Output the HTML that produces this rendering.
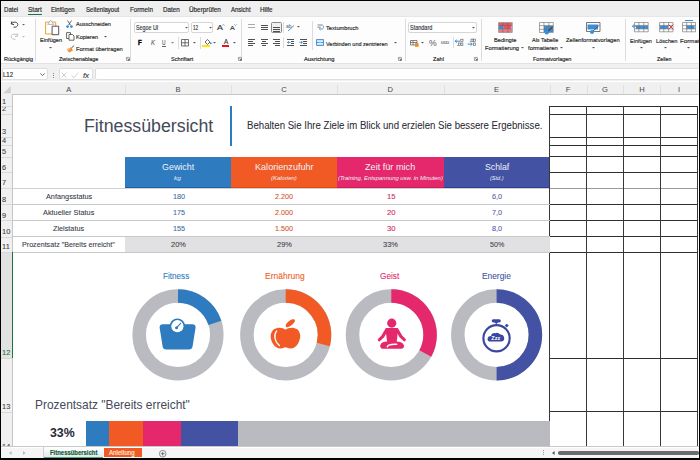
<!DOCTYPE html>
<html><head><meta charset="utf-8">
<style>
*{margin:0;padding:0;box-sizing:border-box}
html,body{width:700px;height:460px;overflow:hidden;background:#fff;font-family:"Liberation Sans",sans-serif;color:#262626}
.a{position:absolute}
.t{position:absolute;white-space:nowrap;line-height:1;transform-origin:0 0;-webkit-text-stroke:0.16px currentColor}
.n{-webkit-text-stroke:0}
svg{position:absolute;overflow:visible}
</style></head><body>
<div class="a" style="left:0px;top:0px;width:700px;height:16px;background:#efefef;"></div>
<div class="t" style="left:3.90px;top:6px;font-size:6.40px;color:#262626;font-weight:normal;font-style:normal;transform:scaleX(0.9511);line-height:7px;">Datei</div>
<div class="t" style="left:27.90px;top:6px;font-size:6.40px;color:#262626;font-weight:normal;font-style:normal;transform:scaleX(1.0218);line-height:7px;">Start</div>
<div class="t" style="left:51.40px;top:6px;font-size:6.40px;color:#262626;font-weight:normal;font-style:normal;transform:scaleX(0.9347);line-height:7px;">Einfügen</div>
<div class="t" style="left:86.00px;top:6px;font-size:6.40px;color:#262626;font-weight:normal;font-style:normal;transform:scaleX(0.9460);line-height:7px;">Seitenlayout</div>
<div class="t" style="left:130.00px;top:6px;font-size:6.40px;color:#262626;font-weight:normal;font-style:normal;transform:scaleX(0.9763);line-height:7px;">Formeln</div>
<div class="t" style="left:162.60px;top:6px;font-size:6.40px;color:#262626;font-weight:normal;font-style:normal;transform:scaleX(0.9785);line-height:7px;">Daten</div>
<div class="t" style="left:188.90px;top:6px;font-size:6.40px;color:#262626;font-weight:normal;font-style:normal;transform:scaleX(0.9939);line-height:7px;">Überprüfen</div>
<div class="t" style="left:230.70px;top:6px;font-size:6.40px;color:#262626;font-weight:normal;font-style:normal;transform:scaleX(0.9345);line-height:7px;">Ansicht</div>
<div class="t" style="left:260.00px;top:6px;font-size:6.40px;color:#262626;font-weight:normal;font-style:normal;transform:scaleX(0.9848);line-height:7px;">Hilfe</div>
<div class="a" style="left:28px;top:14px;width:14px;height:1.4px;background:#1e7145;"></div>
<div class="a" style="left:0px;top:16px;width:700px;height:48px;background:#fdfdfd;"></div>
<div class="a" style="left:0px;top:16px;width:700px;height:1px;background:#e6e6e6;"></div>
<div class="a" style="left:34.5px;top:19px;width:0.8px;height:42px;background:#dcdcdc;"></div>
<div class="a" style="left:130.2px;top:19px;width:0.8px;height:42px;background:#dcdcdc;"></div>
<div class="a" style="left:241.4px;top:19px;width:0.8px;height:42px;background:#dcdcdc;"></div>
<div class="a" style="left:405.4px;top:19px;width:0.8px;height:42px;background:#dcdcdc;"></div>
<div class="a" style="left:480.5px;top:19px;width:0.8px;height:42px;background:#dcdcdc;"></div>
<div class="a" style="left:625.4px;top:19px;width:0.8px;height:42px;background:#dcdcdc;"></div>
<div class="a" style="left:311.6px;top:21px;width:0.8px;height:29px;background:#dcdcdc;"></div>
<div class="a" style="left:178.2px;top:37px;width:0.8px;height:12px;background:#dcdcdc;"></div>
<div class="a" style="left:199.7px;top:37px;width:0.8px;height:12px;background:#dcdcdc;"></div>
<div class="a" style="left:283.4px;top:22px;width:0.8px;height:11px;background:#dcdcdc;"></div>
<div class="a" style="left:283.4px;top:37px;width:0.8px;height:11px;background:#dcdcdc;"></div>
<div class="a" style="left:452.6px;top:37px;width:0.8px;height:11px;background:#dcdcdc;"></div>
<svg style="left:10px;top:20px;" width="9" height="8" viewBox="0 0 9 8"><path d="M2 1.2 L1.2 4 L4 4.6" fill="none" stroke="#333" stroke-width="0.9"/><path d="M1.5 3.8 C3 1.5 7.5 1.5 7.8 4.5 C8 6.5 5.5 7.6 3.5 7.2" fill="none" stroke="#333" stroke-width="0.9"/></svg>
<svg style="left:22.0px;top:23.5px;" width="3" height="2" viewBox="0 0 3 2"><path d="M0 0 L3 0 L1.5 1.6 Z" fill="#666"/></svg>
<svg style="left:10px;top:32px;" width="9" height="8" viewBox="0 0 9 8"><path d="M7 1.2 L7.8 4 L5 4.6" fill="none" stroke="#bbb" stroke-width="0.9"/><path d="M7.5 3.8 C6 1.5 1.5 1.5 1.2 4.5 C1 6.5 3.5 7.6 5.5 7.2" fill="none" stroke="#bbb" stroke-width="0.9"/></svg>
<svg style="left:22.0px;top:35.5px;" width="3" height="2" viewBox="0 0 3 2"><path d="M0 0 L3 0 L1.5 1.6 Z" fill="#bbb"/></svg>
<div class="t" style="left:3.60px;top:56px;font-size:5.90px;color:#262626;font-weight:normal;font-style:normal;transform:scaleX(0.9371);line-height:6px;">Rückgängig</div>
<svg style="left:44px;top:19px;" width="16" height="17" viewBox="0 0 16 17"><path d="M1.6 3.1 H11.7 V15 H1.6 Z" fill="#fff" stroke="#f0a030" stroke-width="1"/><path d="M3.6 5.4 L6.7 1.2 L9.8 5.4 Z" fill="#fff" stroke="#999" stroke-width="0.7"/><path d="M8.1 7.2 H14.7 V15.7 H8.1 Z" fill="#fff" stroke="#444" stroke-width="0.9"/></svg>
<div class="t" style="left:39.90px;top:36px;font-size:6.20px;color:#262626;font-weight:normal;font-style:normal;transform:scaleX(0.9029);line-height:7px;">Einfügen</div>
<svg style="left:48.9px;top:46.5px;" width="3" height="2" viewBox="0 0 3 2"><path d="M0 0 L3 0 L1.5 1.6 Z" fill="#555"/></svg>
<svg style="left:65px;top:20px;" width="9" height="9" viewBox="0 0 9 9"><path d="M2.5 0.5 L5.5 5.2 M6.5 0.5 L3.5 5.2" stroke="#444" stroke-width="0.8"/><circle cx="2.6" cy="6.6" r="1.4" fill="#3b8ed8"/><circle cx="6.4" cy="6.6" r="1.4" fill="#3b8ed8"/></svg>
<div class="t" style="left:75.90px;top:20px;font-size:6.20px;color:#262626;font-weight:normal;font-style:normal;transform:scaleX(0.8960);line-height:7px;">Ausschneiden</div>
<svg style="left:65.5px;top:32px;" width="9" height="9" viewBox="0 0 9 9"><path d="M0.6 0.6 H4.5 V6.5 H0.6 Z" fill="none" stroke="#444" stroke-width="0.8"/><path d="M3 2.5 H6.5 L8 4 V8.2 H3 Z" fill="#fff" stroke="#444" stroke-width="0.8"/></svg>
<div class="t" style="left:75.90px;top:33px;font-size:6.20px;color:#262626;font-weight:normal;font-style:normal;transform:scaleX(0.8905);line-height:7px;">Kopieren</div>
<svg style="left:103.5px;top:35.8px;" width="3" height="2" viewBox="0 0 3 2"><path d="M0 0 L3 0 L1.5 1.6 Z" fill="#555"/></svg>
<svg style="left:65.5px;top:44.5px;" width="9" height="8" viewBox="0 0 9 8"><path d="M0.8 4.2 L5 2.2 L7 5.5 L3 7.6 Z" fill="#f38b2a"/><path d="M5.4 3 L8.2 0.5" stroke="#444" stroke-width="0.9"/><path d="M1.5 5 L4.5 3.6" stroke="#fff" stroke-width="0.6"/></svg>
<div class="t" style="left:75.90px;top:45px;font-size:6.20px;color:#262626;font-weight:normal;font-style:normal;transform:scaleX(0.9114);line-height:7px;">Format übertragen</div>
<div class="t" style="left:58.80px;top:56px;font-size:5.90px;color:#262626;font-weight:normal;font-style:normal;transform:scaleX(0.9241);line-height:6px;">Zwischenablage</div>
<svg style="left:126px;top:57px;" width="4" height="4" viewBox="0 0 4 4"><path d="M0.4 0.4 H3.4 V3.4 H0.4 Z" fill="none" stroke="#666" stroke-width="0.6"/><path d="M1.4 1.4 L3.2 3.2 M3.2 1.8 V3.2 H1.8" fill="none" stroke="#444" stroke-width="0.6"/></svg>
<div class="a" style="left:134.2px;top:22.3px;width:54.8px;height:10.9px;background:#fff;border:0.7px solid #d6d6d6;border-radius:2px"></div>
<div class="t" style="left:135.70px;top:24px;font-size:6.30px;color:#3a3a48;font-weight:normal;font-style:normal;transform:scaleX(0.8489);line-height:7px;">Segoe UI</div>
<svg style="left:184.9px;top:27px;" width="3" height="2" viewBox="0 0 3 2"><path d="M0 0 L3 0 L1.5 1.6 Z" fill="#555"/></svg>
<div class="a" style="left:191px;top:22.3px;width:22px;height:10.9px;background:#fff;border:0.7px solid #d6d6d6;border-radius:2px"></div>
<div class="t" style="left:192.60px;top:24px;font-size:6.30px;color:#3a3a48;font-weight:normal;font-style:normal;transform:scaleX(0.7420);line-height:7px;">12</div>
<svg style="left:209.1px;top:27px;" width="3" height="2" viewBox="0 0 3 2"><path d="M0 0 L3 0 L1.5 1.6 Z" fill="#555"/></svg>
<div class="t" style="left:217.00px;top:23px;font-size:7.56px;color:#333;font-weight:normal;font-style:normal;transform:scaleX(1.1703);line-height:9px;">A</div>
<svg style="left:221.5px;top:23.5px;" width="3" height="2" viewBox="0 0 3 2"><path d="M0.2 1.6 L1.5 0.3 L2.8 1.6" fill="none" stroke="#3b8ed8" stroke-width="0.7"/></svg>
<div class="t" style="left:230.20px;top:25px;font-size:5.96px;color:#333;font-weight:normal;font-style:normal;transform:scaleX(1.1824);line-height:6px;">A</div>
<svg style="left:234px;top:24px;" width="3" height="2" viewBox="0 0 3 2"><path d="M0.2 0.3 L1.5 1.6 L2.8 0.3" fill="none" stroke="#3b8ed8" stroke-width="0.7"/></svg>
<div class="t" style="left:138.10px;top:39px;font-size:6.83px;color:#000;font-weight:bold;font-style:normal;transform:scaleX(0.9105);line-height:7px;-webkit-text-stroke:0.35px #000">F</div>
<div class="t" style="left:150.50px;top:39px;font-size:6.83px;color:#666;font-weight:normal;font-style:italic;transform:scaleX(0.8778);line-height:7px;">K</div>
<div class="t" style="left:162.00px;top:39px;font-size:6.83px;color:#666;font-weight:normal;font-style:normal;transform:scaleX(0.7094);line-height:7px;">U</div>
<div class="a" style="left:161.8px;top:46px;width:4px;height:0.7px;background:#666;"></div>
<svg style="left:171.0px;top:42px;" width="3" height="2" viewBox="0 0 3 2"><path d="M0 0 L3 0 L1.5 1.6 Z" fill="#777"/></svg>
<svg style="left:181px;top:39px;" width="8" height="7.5" viewBox="0 0 8 7.5"><path d="M0.5 0.5 H7.5 V7 H0.5 Z M0.5 3.75 H7.5 M4 0.5 V7" fill="none" stroke="#444" stroke-width="0.75"/></svg>
<svg style="left:192.7px;top:42px;" width="3" height="2" viewBox="0 0 3 2"><path d="M0 0 L3 0 L1.5 1.6 Z" fill="#555"/></svg>
<svg style="left:203.5px;top:38.5px;" width="8" height="6" viewBox="0 0 8 6"><path d="M1 3 L3.5 0.5 L6 3 L3.5 5.5 Z" fill="none" stroke="#444" stroke-width="0.8"/><circle cx="6.8" cy="4.2" r="1" fill="#3b8ed8"/></svg>
<div class="a" style="left:202.2px;top:45px;width:8.2px;height:1.8px;background:#ffe600;"></div>
<svg style="left:213.2px;top:42px;" width="3" height="2" viewBox="0 0 3 2"><path d="M0 0 L3 0 L1.5 1.6 Z" fill="#555"/></svg>
<div class="t" style="left:223.60px;top:37px;font-size:7.27px;color:#333;font-weight:normal;font-style:normal;transform:scaleX(0.8664);line-height:9px;">A</div>
<div class="a" style="left:221.8px;top:45px;width:7.3px;height:1.8px;background:#ee1111;"></div>
<svg style="left:232.9px;top:42px;" width="3" height="2" viewBox="0 0 3 2"><path d="M0 0 L3 0 L1.5 1.6 Z" fill="#555"/></svg>
<div class="t" style="left:171.20px;top:56px;font-size:5.90px;color:#262626;font-weight:normal;font-style:normal;transform:scaleX(0.9489);line-height:6px;">Schriftart</div>
<svg style="left:238px;top:57px;" width="4" height="4" viewBox="0 0 4 4"><path d="M0.4 0.4 H3.4 V3.4 H0.4 Z" fill="none" stroke="#666" stroke-width="0.6"/><path d="M1.4 1.4 L3.2 3.2 M3.2 1.8 V3.2 H1.8" fill="none" stroke="#444" stroke-width="0.6"/></svg>
<div class="a" style="left:248.4px;top:24.0px;width:6.6px;height:0.8px;background:#aaa;"></div>
<div class="a" style="left:248.4px;top:27.3px;width:6.6px;height:0.8px;background:#aaa;"></div>
<div class="a" style="left:260.6px;top:25.2px;width:7px;height:0.8px;background:#505050;"></div>
<div class="a" style="left:260.6px;top:27.099999999999998px;width:7px;height:0.8px;background:#505050;"></div>
<div class="a" style="left:260.6px;top:29.0px;width:7px;height:0.8px;background:#505050;"></div>
<div class="a" style="left:270.9px;top:22.2px;width:10.9px;height:11.2px;background:#f0f0f0;border:0.8px solid #888;border-radius:1.5px"></div>
<div class="a" style="left:273.4px;top:26.6px;width:6.2px;height:0.8px;background:#505050;"></div>
<div class="a" style="left:273.4px;top:28.8px;width:6.2px;height:0.8px;background:#505050;"></div>
<div class="a" style="left:273.4px;top:31.0px;width:6.2px;height:0.8px;background:#505050;"></div>
<svg style="left:286px;top:23px;" width="9" height="9" viewBox="0 0 9 9"><text x="0" y="5" font-size="5" fill="#555" font-family="Liberation Sans">ab</text><path d="M2 8 L8 2.5" stroke="#3b8ed8" stroke-width="0.9"/></svg>
<svg style="left:296.5px;top:26px;" width="3" height="2" viewBox="0 0 3 2"><path d="M0 0 L3 0 L1.5 1.6 Z" fill="#555"/></svg>
<div class="a" style="left:248.4px;top:39.2px;width:6.8px;height:0.8px;background:#505050;"></div>
<div class="a" style="left:248.4px;top:41.2px;width:4.6px;height:0.8px;background:#505050;"></div>
<div class="a" style="left:248.4px;top:43.2px;width:6.8px;height:0.8px;background:#505050;"></div>
<div class="a" style="left:248.4px;top:45.2px;width:4.6px;height:0.8px;background:#505050;"></div>
<div class="a" style="left:260.8px;top:39.2px;width:6.8px;height:0.8px;background:#505050;"></div>
<div class="a" style="left:261.9px;top:41.2px;width:4.6px;height:0.8px;background:#505050;"></div>
<div class="a" style="left:260.8px;top:43.2px;width:6.8px;height:0.8px;background:#505050;"></div>
<div class="a" style="left:261.9px;top:45.2px;width:4.6px;height:0.8px;background:#505050;"></div>
<div class="a" style="left:273px;top:39.2px;width:6.8px;height:0.8px;background:#505050;"></div>
<div class="a" style="left:275.2px;top:41.2px;width:4.6px;height:0.8px;background:#505050;"></div>
<div class="a" style="left:273px;top:43.2px;width:6.8px;height:0.8px;background:#505050;"></div>
<div class="a" style="left:275.2px;top:45.2px;width:4.6px;height:0.8px;background:#505050;"></div>
<div class="a" style="left:287px;top:39.2px;width:7px;height:0.8px;background:#505050;"></div>
<div class="a" style="left:290.5px;top:41.2px;width:3.5px;height:0.8px;background:#505050;"></div>
<div class="a" style="left:290.5px;top:43.2px;width:3.5px;height:0.8px;background:#505050;"></div>
<div class="a" style="left:287px;top:45.2px;width:7px;height:0.8px;background:#505050;"></div>
<svg style="left:286.5px;top:40.8px;" width="4" height="3" viewBox="0 0 4 3"><path d="M3.6 1.4 H0.6 M1.9 0.2 L0.5 1.4 L1.9 2.6" fill="none" stroke="#3b8ed8" stroke-width="0.9"/></svg>
<div class="a" style="left:299.5px;top:39.2px;width:7px;height:0.8px;background:#505050;"></div>
<div class="a" style="left:303px;top:41.2px;width:3.5px;height:0.8px;background:#505050;"></div>
<div class="a" style="left:303px;top:43.2px;width:3.5px;height:0.8px;background:#505050;"></div>
<div class="a" style="left:299.5px;top:45.2px;width:7px;height:0.8px;background:#505050;"></div>
<svg style="left:299.2px;top:40.8px;" width="4" height="3" viewBox="0 0 4 3"><path d="M0.3 1.4 H3.3 M2 0.2 L3.4 1.4 L2 2.6" fill="none" stroke="#3b8ed8" stroke-width="0.9"/></svg>
<svg style="left:317px;top:24px;" width="7" height="8" viewBox="0 0 7 8"><path d="M0.5 1 H5 M0.5 3.2 H3.5" stroke="#666" stroke-width="0.8"/><path d="M5 1 C7 1 7 5 5 5 H2.5 M3.5 4 L2.4 5 L3.5 6" fill="none" stroke="#3b8ed8" stroke-width="0.8"/></svg>
<div class="t" style="left:326.40px;top:24px;font-size:6.20px;color:#262626;font-weight:normal;font-style:normal;transform:scaleX(0.9157);line-height:7px;">Textumbruch</div>
<svg style="left:316px;top:39.3px;" width="8" height="7" viewBox="0 0 8 7"><path d="M0.5 0.5 H7.5 V6.5 H0.5 Z" fill="#cfe3f7" stroke="#3b8ed8" stroke-width="0.9"/><path d="M0.5 3.5 H7.5" stroke="#3b8ed8" stroke-width="0.9"/><path d="M2 2.2 L3.2 3.5 L2 4.8 M6 2.2 L4.8 3.5 L6 4.8" fill="none" stroke="#fff" stroke-width="0.6"/></svg>
<div class="t" style="left:326.40px;top:40px;font-size:6.20px;color:#262626;font-weight:normal;font-style:normal;transform:scaleX(0.8905);line-height:7px;">Verbinden und zentrieren</div>
<svg style="left:394.2px;top:42.3px;" width="3" height="2" viewBox="0 0 3 2"><path d="M0 0 L3 0 L1.5 1.6 Z" fill="#555"/></svg>
<div class="t" style="left:303.70px;top:56px;font-size:5.90px;color:#262626;font-weight:normal;font-style:normal;transform:scaleX(0.9821);line-height:6px;">Ausrichtung</div>
<svg style="left:398px;top:57.3px;" width="4" height="4" viewBox="0 0 4 4"><path d="M0.4 0.4 H3.4 V3.4 H0.4 Z" fill="none" stroke="#666" stroke-width="0.6"/><path d="M1.4 1.4 L3.2 3.2 M3.2 1.8 V3.2 H1.8" fill="none" stroke="#444" stroke-width="0.6"/></svg>
<div class="a" style="left:408.3px;top:22.3px;width:68.8px;height:10.8px;background:#fff;border:0.7px solid #d6d6d6;border-radius:2px"></div>
<div class="t" style="left:409.70px;top:24px;font-size:6.30px;color:#3a3a48;font-weight:normal;font-style:normal;transform:scaleX(0.8721);line-height:7px;">Standard</div>
<svg style="left:472.2px;top:26.8px;" width="3" height="2" viewBox="0 0 3 2"><path d="M0 0 L3 0 L1.5 1.6 Z" fill="#555"/></svg>
<svg style="left:409.7px;top:40px;" width="9" height="7" viewBox="0 0 9 7"><path d="M0.5 0.5 H7 V5 H0.5 Z M0.5 2.5 H7 M3 0.5 V5" fill="none" stroke="#555" stroke-width="0.7"/><rect x="5" y="3.2" width="3.6" height="3.6" fill="#f08a24"/></svg>
<svg style="left:420.8px;top:42.2px;" width="3" height="2" viewBox="0 0 3 2"><path d="M0 0 L3 0 L1.5 1.6 Z" fill="#555"/></svg>
<div class="t" style="left:429.40px;top:37px;font-size:9.50px;color:#555;font-weight:normal;font-style:normal;transform:scaleX(0.9115);line-height:11px;-webkit-text-stroke:0">%</div>
<div class="t" style="left:441.10px;top:40px;font-size:4.00px;color:#777;font-weight:normal;font-style:normal;transform:scaleX(1.1986);line-height:5px;">000</div>
<svg style="left:454px;top:38px;" width="10" height="9" viewBox="0 0 10 9"><path d="M6.2 3.2 H1.4 M2.8 1.8 L1 3.2 L2.8 4.6" fill="none" stroke="#3b8ed8" stroke-width="1"/><rect x="6.8" y="1.2" width="2.2" height="2.2" fill="none" stroke="#555" stroke-width="0.6"/><circle cx="3.6" cy="7.2" r="0.45" fill="#555"/><rect x="4.4" y="5" width="2" height="2.3" fill="none" stroke="#555" stroke-width="0.6"/><rect x="6.9" y="5" width="2" height="2.3" fill="none" stroke="#555" stroke-width="0.6"/></svg>
<svg style="left:467px;top:38px;" width="10" height="9" viewBox="0 0 10 9"><circle cx="3.2" cy="3.4" r="0.45" fill="#555"/><rect x="4" y="1.1" width="2" height="2.3" fill="none" stroke="#555" stroke-width="0.6"/><rect x="6.5" y="1.1" width="2" height="2.3" fill="none" stroke="#555" stroke-width="0.6"/><rect x="6.3" y="5" width="2.2" height="2.3" fill="none" stroke="#555" stroke-width="0.6"/><path d="M0.6 6.1 H5 M3.6 4.7 L5.4 6.1 L3.6 7.5" fill="none" stroke="#3b8ed8" stroke-width="1"/></svg>
<div class="t" style="left:433.10px;top:56px;font-size:5.90px;color:#262626;font-weight:normal;font-style:normal;transform:scaleX(0.9497);line-height:6px;">Zahl</div>
<svg style="left:474.3px;top:57.3px;" width="4" height="4" viewBox="0 0 4 4"><path d="M0.4 0.4 H3.4 V3.4 H0.4 Z" fill="none" stroke="#666" stroke-width="0.6"/><path d="M1.4 1.4 L3.2 3.2 M3.2 1.8 V3.2 H1.8" fill="none" stroke="#444" stroke-width="0.6"/></svg>
<svg style="left:498px;top:21.8px;" width="14.8" height="10.9" viewBox="0 0 14.8 10.9"><rect x="1" y="1" width="12.8" height="3" fill="#f05060"/><rect x="1" y="4" width="4.5" height="3" fill="#3b8ed8"/><rect x="5.5" y="4" width="8" height="3" fill="#f05060"/><rect x="1" y="7.3" width="12.8" height="3" fill="#f07880"/><path d="M0.5 0.5 H14.3 V10.4 H0.5 Z M0.5 3.63 H14.3 M0.5 7.27 H14.3 M4.93 0.5 V10.4 M9.87 0.5 V10.4" fill="none" stroke="#6a6a6a" stroke-width="0.6"/></svg>
<div class="t" style="left:494.10px;top:36px;font-size:6.20px;color:#262626;font-weight:normal;font-style:normal;transform:scaleX(0.9193);line-height:7px;">Bedingte</div>
<div class="t" style="left:485.40px;top:44px;font-size:6.20px;color:#262626;font-weight:normal;font-style:normal;transform:scaleX(0.9249);line-height:7px;">Formatierung</div>
<svg style="left:520.8px;top:47px;" width="3" height="2" viewBox="0 0 3 2"><path d="M0 0 L3 0 L1.5 1.6 Z" fill="#555"/></svg>
<svg style="left:538.5px;top:21.8px;" width="14.8" height="11" viewBox="0 0 14.8 11"><rect x="5" y="3.7" width="9" height="6.5" fill="#3b8ed8"/><path d="M0.5 0.5 H14.3 V10.5 H0.5 Z M0.5 3.67 H14.3 M0.5 7.33 H14.3 M4.93 0.5 V10.5 M9.87 0.5 V10.5" fill="none" stroke="#6a6a6a" stroke-width="0.6"/></svg>
<svg style="left:544px;top:26px;" width="10" height="9" viewBox="0 0 10 9"><path d="M1.5 7.5 L8.5 1" stroke="#444" stroke-width="1.1"/><circle cx="2.8" cy="6.2" r="2.2" fill="#3b8ed8"/></svg>
<div class="t" style="left:532.00px;top:36px;font-size:6.20px;color:#262626;font-weight:normal;font-style:normal;transform:scaleX(0.8838);line-height:7px;">Als Tabelle</div>
<div class="t" style="left:528.20px;top:44px;font-size:6.20px;color:#262626;font-weight:normal;font-style:normal;transform:scaleX(0.9503);line-height:7px;">formatieren</div>
<svg style="left:559.5px;top:47px;" width="3" height="2" viewBox="0 0 3 2"><path d="M0 0 L3 0 L1.5 1.6 Z" fill="#555"/></svg>
<svg style="left:586px;top:22.3px;" width="15" height="12" viewBox="0 0 15 12"><path d="M0.5 0.5 H14 V9.5 H0.5 Z" fill="#fff" stroke="#555" stroke-width="0.8"/><rect x="1.5" y="2.5" width="10.5" height="5" fill="#3b8ed8"/><path d="M5 11 L13.5 3" stroke="#555" stroke-width="1"/><circle cx="6" cy="10" r="2" fill="#3b8ed8"/></svg>
<div class="t" style="left:566.30px;top:36px;font-size:6.20px;color:#262626;font-weight:normal;font-style:normal;transform:scaleX(0.9220);line-height:7px;">Zellenformatvorlagen</div>
<svg style="left:591.6px;top:46.8px;" width="3" height="2" viewBox="0 0 3 2"><path d="M0 0 L3 0 L1.5 1.6 Z" fill="#555"/></svg>
<div class="t" style="left:533.00px;top:56px;font-size:5.90px;color:#262626;font-weight:normal;font-style:normal;transform:scaleX(0.9294);line-height:6px;">Formatvorlagen</div>
<svg style="left:634.3px;top:22px;" width="14.7" height="10.3" viewBox="0 0 14.7 10.3"><rect x="2" y="3.6" width="12" height="3.3" fill="#3b8ed8"/><path d="M0.5 0.5 H14.2 V9.8 H0.5 Z M0.5 3.43 H14.2 M0.5 6.87 H14.2 M4.90 0.5 V9.8 M9.80 0.5 V9.8" fill="none" stroke="#6a6a6a" stroke-width="0.6"/></svg>
<svg style="left:632px;top:23.5px;" width="5" height="5" viewBox="0 0 5 5"><path d="M4 2.2 H0.5 M2 0.6 L0.4 2.2 L2 3.8" fill="none" stroke="#3b8ed8" stroke-width="1"/></svg>
<div class="t" style="left:630.00px;top:37px;font-size:6.20px;color:#262626;font-weight:normal;font-style:normal;transform:scaleX(0.8988);line-height:7px;">Einfügen</div>
<svg style="left:639.9px;top:46.8px;" width="3" height="2" viewBox="0 0 3 2"><path d="M0 0 L3 0 L1.5 1.6 Z" fill="#555"/></svg>
<svg style="left:659px;top:22px;" width="14.4" height="10.3" viewBox="0 0 14.4 10.3"><rect x="1" y="3.6" width="8" height="3.3" fill="#3b8ed8"/><path d="M0.5 0.5 H13.9 V9.8 H0.5 Z M0.5 3.43 H13.9 M0.5 6.87 H13.9 M4.80 0.5 V9.8 M9.60 0.5 V9.8" fill="none" stroke="#6a6a6a" stroke-width="0.6"/></svg>
<svg style="left:667.5px;top:24px;" width="6" height="6" viewBox="0 0 6 6"><path d="M0.6 0.6 L5.4 5.4 M5.4 0.6 L0.6 5.4" stroke="#e03030" stroke-width="0.9"/></svg>
<div class="t" style="left:655.70px;top:37px;font-size:6.20px;color:#262626;font-weight:normal;font-style:normal;transform:scaleX(0.9087);line-height:7px;">Löschen</div>
<svg style="left:664.3px;top:46.8px;" width="3" height="2" viewBox="0 0 3 2"><path d="M0 0 L3 0 L1.5 1.6 Z" fill="#555"/></svg>
<svg style="left:682px;top:22px;" width="14" height="10.3" viewBox="0 0 14 10.3"><rect x="4.5" y="3.6" width="8" height="3.3" fill="#3b8ed8"/><path d="M0.5 0.5 H13.5 V9.8 H0.5 Z M0.5 3.43 H13.5 M0.5 6.87 H13.5 M4.67 0.5 V9.8 M9.33 0.5 V9.8" fill="none" stroke="#6a6a6a" stroke-width="0.6"/></svg>
<div class="a" style="left:685px;top:19.6px;width:8px;height:0.8px;background:#3b8ed8;"></div>
<div class="t" style="left:680.00px;top:37px;font-size:6.20px;color:#262626;font-weight:normal;font-style:normal;line-height:7px;">Format</div>
<svg style="left:687.1px;top:46.8px;" width="3" height="2" viewBox="0 0 3 2"><path d="M0 0 L3 0 L1.5 1.6 Z" fill="#555"/></svg>
<div class="t" style="left:656.80px;top:56px;font-size:5.90px;color:#262626;font-weight:normal;font-style:normal;transform:scaleX(0.8961);line-height:6px;">Zellen</div>
<div class="a" style="left:0px;top:63.4px;width:700px;height:18.1px;background:#f0f0f0;"></div>
<div class="a" style="left:0px;top:63.4px;width:700px;height:1px;background:#e3e3e3;"></div>
<div class="a" style="left:2px;top:68.3px;width:46.3px;height:11.8px;background:#fff;border:0.6px solid #dedede;border-radius:2px"></div>
<div class="t" style="left:3.10px;top:71px;font-size:6.60px;color:#333;font-weight:normal;font-style:normal;transform:scaleX(0.9080);line-height:7px;">L12</div>
<svg style="left:40px;top:73px;" width="5" height="3" viewBox="0 0 5 3"><path d="M0.4 0.4 L2.5 2.6 L4.6 0.4" fill="none" stroke="#444" stroke-width="0.8"/></svg>
<div class="a" style="left:53px;top:72.5px;width:0.9px;height:0.9px;background:#888;"></div>
<div class="a" style="left:53px;top:74.5px;width:0.9px;height:0.9px;background:#888;"></div>
<div class="a" style="left:53px;top:76.5px;width:0.9px;height:0.9px;background:#888;"></div>
<div class="a" style="left:58.5px;top:68.3px;width:34.4px;height:11.8px;background:#fff;border:0.6px solid #dedede;border-radius:2px"></div>
<svg style="left:60.7px;top:71.5px;" width="7" height="6" viewBox="0 0 7 6"><path d="M0.5 0.5 L5.5 5.5 M5.5 0.5 L0.5 5.5" stroke="#bbb" stroke-width="0.7"/></svg>
<svg style="left:71.4px;top:71.5px;" width="8" height="6" viewBox="0 0 8 6"><path d="M0.5 3.5 L2.8 5.6 L7.6 0.6" fill="none" stroke="#bbb" stroke-width="0.7"/></svg>
<div class="t" style="left:82.90px;top:71px;font-size:8.00px;color:#444;font-weight:normal;font-style:italic;line-height:9px;font-family:"Liberation Serif",serif">fx</div>
<div class="a" style="left:95.4px;top:68.3px;width:606px;height:11.8px;background:#fff;border:0.6px solid #dedede;border-radius:2px"></div>
<div class="a" style="left:0px;top:81.5px;width:700px;height:12.6px;background:#f0f0f0;"></div>
<div class="a" style="left:0px;top:94px;width:700px;height:0.9px;background:#c6c6c6;"></div>
<svg style="left:2.9px;top:85.6px;" width="8" height="7.2" viewBox="0 0 8 7.2"><path d="M7.8 0 V7.2 H0 Z" fill="#d0d0d0"/></svg>
<div class="t" style="left:66.15px;top:85px;font-size:7.60px;color:#4a4a4a;font-weight:normal;font-style:normal;line-height:9px;-webkit-text-stroke:0.03px currentColor">A</div>
<div class="a" style="left:125px;top:84.5px;width:0.8px;height:9.5px;background:#e0e0e0;"></div>
<div class="t" style="left:175.50px;top:85px;font-size:7.60px;color:#4a4a4a;font-weight:normal;font-style:normal;line-height:9px;-webkit-text-stroke:0.03px currentColor">B</div>
<div class="a" style="left:231px;top:84.5px;width:0.8px;height:9.5px;background:#e0e0e0;"></div>
<div class="t" style="left:281.30px;top:85px;font-size:7.60px;color:#4a4a4a;font-weight:normal;font-style:normal;line-height:9px;-webkit-text-stroke:0.03px currentColor">C</div>
<div class="a" style="left:337px;top:84.5px;width:0.8px;height:9.5px;background:#e0e0e0;"></div>
<div class="t" style="left:387.55px;top:85px;font-size:7.60px;color:#4a4a4a;font-weight:normal;font-style:normal;line-height:9px;-webkit-text-stroke:0.03px currentColor">D</div>
<div class="a" style="left:443.5px;top:84.5px;width:0.8px;height:9.5px;background:#e0e0e0;"></div>
<div class="t" style="left:494.00px;top:85px;font-size:7.60px;color:#4a4a4a;font-weight:normal;font-style:normal;line-height:9px;-webkit-text-stroke:0.03px currentColor">E</div>
<div class="a" style="left:549.5px;top:84.5px;width:0.8px;height:9.5px;background:#e0e0e0;"></div>
<div class="t" style="left:565.85px;top:85px;font-size:7.60px;color:#4a4a4a;font-weight:normal;font-style:normal;line-height:9px;-webkit-text-stroke:0.03px currentColor">F</div>
<div class="a" style="left:586.6px;top:84.5px;width:0.8px;height:9.5px;background:#e0e0e0;"></div>
<div class="t" style="left:602.10px;top:85px;font-size:7.60px;color:#4a4a4a;font-weight:normal;font-style:normal;line-height:9px;-webkit-text-stroke:0.03px currentColor">G</div>
<div class="a" style="left:623.4px;top:84.5px;width:0.8px;height:9.5px;background:#e0e0e0;"></div>
<div class="t" style="left:639.15px;top:85px;font-size:7.60px;color:#4a4a4a;font-weight:normal;font-style:normal;line-height:9px;-webkit-text-stroke:0.03px currentColor">H</div>
<div class="a" style="left:660.3px;top:84.5px;width:0.8px;height:9.5px;background:#e0e0e0;"></div>
<div class="t" style="left:677.90px;top:85px;font-size:7.60px;color:#4a4a4a;font-weight:normal;font-style:normal;line-height:9px;-webkit-text-stroke:0.03px currentColor">I</div>
<div class="a" style="left:0px;top:94px;width:12.3px;height:352px;background:#f0f0f0;"></div>
<div class="a" style="left:12.1px;top:94px;width:0.9px;height:352px;background:#c6c6c6;"></div>
<div class="a" style="left:0px;top:106.3px;width:12px;height:0.8px;background:#d8d8d8;"></div>
<div class="a" style="left:0;top:94.8px;width:12px;height:11.499999999999996px;overflow:hidden">
<div class="t" style="left:2.10px;top:2.200000000000003px;font-size:7.40px;color:#444;font-weight:normal;font-style:normal;line-height:9px;-webkit-text-stroke:0.1px currentColor">1</div>
</div>
<div class="a" style="left:0px;top:114px;width:12px;height:0.8px;background:#d8d8d8;"></div>
<div class="a" style="left:0;top:107.1px;width:12px;height:6.900000000000003px;overflow:hidden">
<div class="t" style="left:2.10px;top:-3.0999999999999943px;font-size:7.40px;color:#444;font-weight:normal;font-style:normal;line-height:9px;-webkit-text-stroke:0.1px currentColor">2</div>
</div>
<div class="a" style="left:0px;top:137px;width:12px;height:0.8px;background:#d8d8d8;"></div>
<div class="a" style="left:0;top:114.8px;width:12px;height:22.2px;overflow:hidden">
<div class="t" style="left:2.10px;top:12.200000000000003px;font-size:7.40px;color:#444;font-weight:normal;font-style:normal;line-height:9px;-webkit-text-stroke:0.1px currentColor">3</div>
</div>
<div class="a" style="left:0px;top:145.2px;width:12px;height:0.8px;background:#d8d8d8;"></div>
<div class="a" style="left:0;top:137.8px;width:12px;height:7.399999999999989px;overflow:hidden">
<div class="t" style="left:2.10px;top:-1.8000000000000114px;font-size:7.40px;color:#444;font-weight:normal;font-style:normal;line-height:9px;-webkit-text-stroke:0.1px currentColor">4</div>
</div>
<div class="a" style="left:0px;top:156.8px;width:12px;height:0.8px;background:#d8d8d8;"></div>
<div class="a" style="left:0;top:146.0px;width:12px;height:10.800000000000022px;overflow:hidden">
<div class="t" style="left:2.10px;top:1.0px;font-size:7.40px;color:#444;font-weight:normal;font-style:normal;line-height:9px;-webkit-text-stroke:0.1px currentColor">5</div>
</div>
<div class="a" style="left:0px;top:172.3px;width:12px;height:0.8px;background:#d8d8d8;"></div>
<div class="a" style="left:0;top:157.60000000000002px;width:12px;height:14.7px;overflow:hidden">
<div class="t" style="left:2.10px;top:5.399999999999977px;font-size:7.40px;color:#444;font-weight:normal;font-style:normal;line-height:9px;-webkit-text-stroke:0.1px currentColor">6</div>
</div>
<div class="a" style="left:0px;top:188px;width:12px;height:0.8px;background:#d8d8d8;"></div>
<div class="a" style="left:0;top:173.10000000000002px;width:12px;height:14.899999999999988px;overflow:hidden">
<div class="t" style="left:2.10px;top:4.899999999999977px;font-size:7.40px;color:#444;font-weight:normal;font-style:normal;line-height:9px;-webkit-text-stroke:0.1px currentColor">7</div>
</div>
<div class="a" style="left:0px;top:204.3px;width:12px;height:0.8px;background:#d8d8d8;"></div>
<div class="a" style="left:0;top:188.8px;width:12px;height:15.50000000000001px;overflow:hidden">
<div class="t" style="left:2.10px;top:6.199999999999989px;font-size:7.40px;color:#444;font-weight:normal;font-style:normal;line-height:9px;-webkit-text-stroke:0.1px currentColor">8</div>
</div>
<div class="a" style="left:0px;top:220.3px;width:12px;height:0.8px;background:#d8d8d8;"></div>
<div class="a" style="left:0;top:205.10000000000002px;width:12px;height:15.2px;overflow:hidden">
<div class="t" style="left:2.10px;top:5.899999999999977px;font-size:7.40px;color:#444;font-weight:normal;font-style:normal;line-height:9px;-webkit-text-stroke:0.1px currentColor">9</div>
</div>
<div class="a" style="left:0px;top:236.5px;width:12px;height:0.8px;background:#d8d8d8;"></div>
<div class="a" style="left:0;top:221.10000000000002px;width:12px;height:15.399999999999988px;overflow:hidden">
<div class="t" style="left:2.10px;top:5.899999999999977px;font-size:7.40px;color:#444;font-weight:normal;font-style:normal;line-height:9px;-webkit-text-stroke:0.1px currentColor">10</div>
</div>
<div class="a" style="left:0px;top:252px;width:12px;height:0.8px;background:#d8d8d8;"></div>
<div class="a" style="left:0;top:237.3px;width:12px;height:14.7px;overflow:hidden">
<div class="t" style="left:2.10px;top:4.699999999999989px;font-size:7.40px;color:#444;font-weight:normal;font-style:normal;line-height:9px;-webkit-text-stroke:0.1px currentColor">11</div>
</div>
<div class="a" style="left:0px;top:358px;width:12px;height:0.8px;background:#d8d8d8;"></div>
<div class="a" style="left:0px;top:411.5px;width:12px;height:0.8px;background:#d8d8d8;"></div>
<div class="a" style="left:0;top:358.8px;width:12px;height:52.7px;overflow:hidden">
<div class="t" style="left:2.10px;top:43.19999999999999px;font-size:7.40px;color:#444;font-weight:normal;font-style:normal;line-height:9px;-webkit-text-stroke:0.1px currentColor">13</div>
</div>
<div class="a" style="left:0px;top:452px;width:12px;height:0.8px;background:#d8d8d8;"></div>
<div class="a" style="left:0;top:412.3px;width:12px;height:39.7px;overflow:hidden">
<div class="t" style="left:2.10px;top:29.69999999999999px;font-size:7.40px;color:#444;font-weight:normal;font-style:normal;line-height:9px;-webkit-text-stroke:0.1px currentColor">14</div>
</div>
<div class="a" style="left:0px;top:252px;width:12.2px;height:106px;background:#e2e2e2;"></div>
<div class="a" style="left:0px;top:252px;width:12px;height:0.8px;background:#d8d8d8;"></div>
<div class="a" style="left:0px;top:358px;width:12px;height:0.8px;background:#d8d8d8;"></div>
<div class="a" style="left:11.6px;top:252px;width:1.6px;height:106px;background:#217346;"></div>
<div class="t" style="left:2.10px;top:348px;font-size:7.40px;color:#217346;font-weight:normal;font-style:normal;line-height:9px;-webkit-text-stroke:0.1px currentColor">12</div>
<div class="t" style="left:84.00px;top:116px;font-size:18.00px;color:#444a5a;font-weight:normal;font-style:normal;transform:scaleX(0.9866);line-height:20px;-webkit-text-stroke:0">Fitnessübersicht</div>
<div class="a" style="left:230.2px;top:106.3px;width:2.2px;height:39.3px;background:#2e7bbf;"></div>
<div class="t" style="left:247.20px;top:120px;font-size:10.00px;color:#2b2b35;font-weight:normal;font-style:normal;transform:scaleX(0.9628);line-height:11px;-webkit-text-stroke:0.05px currentColor">Behalten Sie Ihre Ziele im Blick und erzielen Sie bessere Ergebnisse.</div>
<div class="a" style="left:124.6px;top:156.5px;width:106.4px;height:31.3px;background:#2e7bbf;"></div>
<div class="a" style="left:231px;top:156.5px;width:106px;height:31.3px;background:#f15a24;"></div>
<div class="a" style="left:337px;top:156.5px;width:106.5px;height:31.3px;background:#e4286b;"></div>
<div class="a" style="left:443.5px;top:156.5px;width:106.0px;height:31.3px;background:#4352a3;"></div>
<div class="a" style="left:12.5px;top:187.8px;width:537px;height:0.6px;background:#d0d0d0;"></div>
<div class="a" style="left:124.6px;top:186.9px;width:106.4px;height:1px;background:#1d62a6;"></div>
<div class="a" style="left:231px;top:186.9px;width:106px;height:1px;background:#e04a12;"></div>
<div class="a" style="left:337px;top:186.9px;width:106.5px;height:1px;background:#cc1d57;"></div>
<div class="a" style="left:443.5px;top:186.9px;width:106.0px;height:1px;background:#2f3b94;"></div>
<div class="a" style="left:549.5px;top:105.89999999999999px;width:148.5px;height:1px;background:#303030;"></div>
<div class="a" style="left:549.5px;top:113.6px;width:148.5px;height:1px;background:#303030;"></div>
<div class="a" style="left:549.5px;top:136.6px;width:148.5px;height:1px;background:#303030;"></div>
<div class="a" style="left:549.5px;top:144.79999999999998px;width:148.5px;height:1px;background:#303030;"></div>
<div class="a" style="left:549.5px;top:156.4px;width:148.5px;height:1px;background:#303030;"></div>
<div class="a" style="left:549.5px;top:171.9px;width:148.5px;height:1px;background:#303030;"></div>
<div class="a" style="left:549.5px;top:187.6px;width:148.5px;height:1px;background:#9a9a9a;"></div>
<div class="a" style="left:549.5px;top:203.9px;width:148.5px;height:1px;background:#303030;"></div>
<div class="a" style="left:549.5px;top:219.9px;width:148.5px;height:1px;background:#303030;"></div>
<div class="a" style="left:549.5px;top:236.1px;width:148.5px;height:1px;background:#303030;"></div>
<div class="a" style="left:549.5px;top:251.6px;width:148.5px;height:1px;background:#303030;"></div>
<div class="a" style="left:549.5px;top:357.6px;width:148.5px;height:1px;background:#303030;"></div>
<div class="a" style="left:549.5px;top:411.1px;width:148.5px;height:1px;background:#303030;"></div>
<div class="a" style="left:549.1px;top:105.9px;width:1px;height:340.5px;background:#383838;"></div>
<div class="a" style="left:586.2px;top:105.9px;width:1px;height:340.5px;background:#383838;"></div>
<div class="a" style="left:623.0px;top:105.9px;width:1px;height:340.5px;background:#383838;"></div>
<div class="a" style="left:659.9px;top:105.9px;width:1px;height:340.5px;background:#383838;"></div>
<div class="a" style="left:697.1px;top:105.9px;width:1px;height:340.5px;background:#383838;"></div>
<div class="a" style="left:124.6px;top:236.5px;width:425px;height:15.5px;background:#e1e1e3;"></div>
<div class="a" style="left:12.5px;top:204.0px;width:537px;height:0.8px;background:#c8c8c8;"></div>
<div class="a" style="left:12.5px;top:220.0px;width:537px;height:0.8px;background:#c8c8c8;"></div>
<div class="a" style="left:12.5px;top:236.2px;width:537px;height:0.8px;background:#c8c8c8;"></div>
<div class="a" style="left:12.5px;top:251.7px;width:537px;height:0.8px;background:#c8c8c8;"></div>
<svg style="left:0px;top:0px;" width="700" height="460" viewBox="0 0 700 460"><circle cx="178.0" cy="334.85" r="38.8" fill="none" stroke="#b9bbc1" stroke-width="13.5"/><path d="M178.0 296.05 A38.8 38.8 0 0 1 214.90 322.86" fill="none" stroke="#2e7bbf" stroke-width="13.5"/><circle cx="285.7" cy="334.85" r="38.8" fill="none" stroke="#b9bbc1" stroke-width="13.5"/><path d="M285.7 296.05 A38.8 38.8 0 0 1 323.28 344.50" fill="none" stroke="#f15a24" stroke-width="13.5"/><circle cx="391.3" cy="334.85" r="38.8" fill="none" stroke="#b9bbc1" stroke-width="13.5"/><path d="M391.3 296.05 A38.8 38.8 0 0 1 425.30 353.54" fill="none" stroke="#e4286b" stroke-width="13.5"/><circle cx="496.6" cy="334.85" r="38.8" fill="none" stroke="#b9bbc1" stroke-width="13.5"/><path d="M496.6 296.05 A38.8 38.8 0 0 1 496.60 373.65" fill="none" stroke="#4352a3" stroke-width="13.5"/></svg>
<div class="t" style="left:35.40px;top:398px;font-size:12.20px;color:#444a5a;font-weight:normal;font-style:normal;transform:scaleX(0.9778);line-height:14px;-webkit-text-stroke:0">Prozentsatz "Bereits erreicht"</div>
<div class="t" style="left:50.20px;top:426px;font-size:12.50px;color:#262a36;font-weight:bold;font-style:normal;transform:scaleX(0.9872);line-height:14px;-webkit-text-stroke:0">33%</div>
<div class="a" style="left:86px;top:421.4px;width:463.5px;height:25px;background:#b9bbc1;"></div>
<div class="a" style="left:86px;top:421.4px;width:23px;height:25px;background:#2e7bbf;"></div>
<div class="a" style="left:109px;top:421.4px;width:34px;height:25px;background:#f15a24;"></div>
<div class="a" style="left:143px;top:421.4px;width:38px;height:25px;background:#e4286b;"></div>
<div class="a" style="left:181px;top:421.4px;width:57px;height:25px;background:#4352a3;"></div>
<div class="t" style="left:162.20px;top:162px;font-size:9.20px;color:#eef3fa;font-weight:normal;font-style:normal;transform:scaleX(0.9719);line-height:10px;-webkit-text-stroke:0">Gewicht</div>
<div class="t" style="left:174.00px;top:175px;font-size:5.80px;color:#eef3fa;font-weight:normal;font-style:italic;transform:scaleX(1.1426);line-height:6px;-webkit-text-stroke:0">kg</div>
<div class="t" style="left:254.80px;top:162px;font-size:9.20px;color:#eef3fa;font-weight:normal;font-style:normal;transform:scaleX(0.9895);line-height:10px;-webkit-text-stroke:0">Kalorienzufuhr</div>
<div class="t" style="left:270.80px;top:175px;font-size:5.80px;color:#eef3fa;font-weight:normal;font-style:italic;transform:scaleX(1.0261);line-height:6px;-webkit-text-stroke:0">(Kalorien)</div>
<div class="t" style="left:365.30px;top:162px;font-size:9.20px;color:#eef3fa;font-weight:normal;font-style:normal;transform:scaleX(0.9939);line-height:10px;-webkit-text-stroke:0">Zeit für mich</div>
<div class="t" style="left:337.80px;top:175px;font-size:5.80px;color:#eef3fa;font-weight:normal;font-style:italic;transform:scaleX(1.0147);line-height:6px;-webkit-text-stroke:0">(Training, Entspannung usw. in Minuten)</div>
<div class="t" style="left:484.70px;top:162px;font-size:9.20px;color:#eef3fa;font-weight:normal;font-style:normal;transform:scaleX(0.9503);line-height:10px;-webkit-text-stroke:0">Schlaf</div>
<div class="t" style="left:489.90px;top:175px;font-size:5.80px;color:#eef3fa;font-weight:normal;font-style:italic;transform:scaleX(0.9591);line-height:6px;-webkit-text-stroke:0">(Std.)</div>
<div class="t" style="left:45.80px;top:192px;font-size:7.90px;color:#333845;font-weight:normal;font-style:normal;transform:scaleX(0.9248);line-height:9px;-webkit-text-stroke:0.08px currentColor">Anfangsstatus</div>
<div class="t" style="left:43.00px;top:208px;font-size:7.90px;color:#333845;font-weight:normal;font-style:normal;transform:scaleX(0.9290);line-height:9px;-webkit-text-stroke:0.08px currentColor">Aktueller Status</div>
<div class="t" style="left:53.40px;top:224px;font-size:7.90px;color:#333845;font-weight:normal;font-style:normal;transform:scaleX(0.9199);line-height:9px;-webkit-text-stroke:0.08px currentColor">Zielstatus</div>
<div class="t" style="left:21.70px;top:240px;font-size:7.90px;color:#333845;font-weight:normal;font-style:normal;transform:scaleX(0.9051);line-height:9px;-webkit-text-stroke:0.08px currentColor">Prozentsatz "Bereits erreicht"</div>
<div class="t" style="left:172.60px;top:192px;font-size:7.90px;color:#3a6aa0;font-weight:normal;font-style:normal;transform:scaleX(0.9179);line-height:9px;-webkit-text-stroke:0.08px currentColor">180</div>
<div class="t" style="left:275.20px;top:192px;font-size:7.90px;color:#d4561f;font-weight:normal;font-style:normal;transform:scaleX(0.9105);line-height:9px;-webkit-text-stroke:0.08px currentColor">2.200</div>
<div class="t" style="left:386.70px;top:192px;font-size:7.90px;color:#cf2a5c;font-weight:normal;font-style:normal;transform:scaleX(0.9787);line-height:9px;-webkit-text-stroke:0.08px currentColor">15</div>
<div class="t" style="left:491.60px;top:192px;font-size:7.90px;color:#4a58a8;font-weight:normal;font-style:normal;transform:scaleX(0.9197);line-height:9px;-webkit-text-stroke:0.08px currentColor">6,0</div>
<div class="t" style="left:172.60px;top:208px;font-size:7.90px;color:#3a6aa0;font-weight:normal;font-style:normal;transform:scaleX(0.9179);line-height:9px;-webkit-text-stroke:0.08px currentColor">175</div>
<div class="t" style="left:275.20px;top:208px;font-size:7.90px;color:#d4561f;font-weight:normal;font-style:normal;transform:scaleX(0.9105);line-height:9px;-webkit-text-stroke:0.08px currentColor">2.000</div>
<div class="t" style="left:386.70px;top:208px;font-size:7.90px;color:#cf2a5c;font-weight:normal;font-style:normal;transform:scaleX(0.9787);line-height:9px;-webkit-text-stroke:0.08px currentColor">20</div>
<div class="t" style="left:491.60px;top:208px;font-size:7.90px;color:#4a58a8;font-weight:normal;font-style:normal;transform:scaleX(0.9197);line-height:9px;-webkit-text-stroke:0.08px currentColor">7,0</div>
<div class="t" style="left:172.60px;top:224px;font-size:7.90px;color:#3a6aa0;font-weight:normal;font-style:normal;transform:scaleX(0.9179);line-height:9px;-webkit-text-stroke:0.08px currentColor">155</div>
<div class="t" style="left:275.20px;top:224px;font-size:7.90px;color:#d4561f;font-weight:normal;font-style:normal;transform:scaleX(0.9105);line-height:9px;-webkit-text-stroke:0.08px currentColor">1.500</div>
<div class="t" style="left:386.70px;top:224px;font-size:7.90px;color:#cf2a5c;font-weight:normal;font-style:normal;transform:scaleX(0.9787);line-height:9px;-webkit-text-stroke:0.08px currentColor">30</div>
<div class="t" style="left:491.60px;top:224px;font-size:7.90px;color:#4a58a8;font-weight:normal;font-style:normal;transform:scaleX(0.9197);line-height:9px;-webkit-text-stroke:0.08px currentColor">8,0</div>
<div class="t" style="left:170.60px;top:240px;font-size:7.90px;color:#444;font-weight:normal;font-style:normal;transform:scaleX(0.9423);line-height:9px;-webkit-text-stroke:0.08px currentColor">20%</div>
<div class="t" style="left:276.50px;top:240px;font-size:7.90px;color:#444;font-weight:normal;font-style:normal;transform:scaleX(0.9423);line-height:9px;-webkit-text-stroke:0.08px currentColor">29%</div>
<div class="t" style="left:383.30px;top:240px;font-size:7.90px;color:#444;font-weight:normal;font-style:normal;transform:scaleX(0.9486);line-height:9px;-webkit-text-stroke:0.08px currentColor">33%</div>
<div class="t" style="left:489.50px;top:240px;font-size:7.90px;color:#444;font-weight:normal;font-style:normal;transform:scaleX(0.9044);line-height:9px;-webkit-text-stroke:0.08px currentColor">50%</div>
<div class="t" style="left:162.60px;top:271px;font-size:9.00px;color:#2e7bbf;font-weight:normal;font-style:normal;transform:scaleX(0.9032);line-height:10px;-webkit-text-stroke:0.08px currentColor">Fitness</div>
<div class="t" style="left:265.40px;top:271px;font-size:9.00px;color:#f15a24;font-weight:normal;font-style:normal;transform:scaleX(0.9422);line-height:10px;-webkit-text-stroke:0.08px currentColor">Ernährung</div>
<div class="t" style="left:380.00px;top:271px;font-size:9.00px;color:#e4286b;font-weight:normal;font-style:normal;transform:scaleX(0.9188);line-height:10px;-webkit-text-stroke:0.08px currentColor">Geist</div>
<div class="t" style="left:481.60px;top:271px;font-size:9.00px;color:#4352a3;font-weight:normal;font-style:normal;transform:scaleX(0.9284);line-height:10px;-webkit-text-stroke:0.08px currentColor">Energie</div>
<svg style="left:0px;top:0px;" width="700" height="460" viewBox="0 0 700 460"><path d="M159.6 327.6 Q159.6 324.3 162.9 324.3 H192.3 Q195.6 324.3 195.6 327.6 L192.6 346.2 Q192.1 349.4 188.9 349.4 H166.3 Q163.1 349.4 162.6 346.2 Z" fill="#2e7bbf"/><circle cx="177.4" cy="326.2" r="7.8" fill="#2e7bbf"/><circle cx="177.4" cy="326.2" r="6.1" fill="#fff"/><path d="M176.2 328.2 L180.6 323.4" stroke="#2e7bbf" stroke-width="1.1" stroke-linecap="round"/><circle cx="176.6" cy="327.8" r="1.5" fill="#2e7bbf"/><g transform="translate(265,314) scale(0.09132)"><path d="M225 172 C190 140 80 130 62 230 C55 300 110 380 170 378 C200 376 215 365 225 365 C235 365 250 376 280 378 C340 380 390 300 385 230 C375 130 260 140 225 172 Z" fill="#f15a24"/><ellipse cx="277" cy="100" rx="62" ry="27" transform="rotate(-38 277 100)" fill="#f15a24"/><path d="M128 185 C95 225 100 300 158 345" fill="none" stroke="#fff" stroke-width="14" stroke-linecap="round"/></g><g transform="translate(370,314) scale(0.09132)"><circle cx="238" cy="100" r="50" fill="#e4286b"/><path d="M170 165 Q172 152 190 152 H288 Q305 152 308 165 L292 310 H188 Z" fill="#e4286b"/><path d="M182 172 L140 245 L102 282 M296 172 L338 245 L376 282" fill="none" stroke="#e4286b" stroke-width="34" stroke-linecap="round" stroke-linejoin="round"/><path d="M112 345 Q118 300 195 300 H285 Q360 300 372 345 Q375 380 340 380 H140 Q108 378 112 345 Z" fill="#e4286b"/><path d="M190 358 Q198 328 292 332" fill="none" stroke="#fff" stroke-width="16" stroke-linecap="round"/></g><g transform="translate(476,314) scale(0.09132)"><circle cx="225" cy="265" r="144" fill="none" stroke="#3a47a0" stroke-width="24"/><rect x="172" y="58" width="100" height="34" rx="17" fill="#3a47a0"/><path d="M200 85 H245 L222 112 Z" fill="#3a47a0"/><rect x="322" y="112" width="30" height="30" transform="rotate(45 337 127)" fill="#3a47a0"/><path d="M150 300 Q120 298 128 262 Q135 238 165 240 Q172 205 210 210 Q240 195 265 225 Q300 222 308 258 Q315 298 280 300 Z" fill="#3a47a0"/><text x="168" y="290" font-size="62" font-weight="bold" fill="#fff" font-family="Liberation Sans">Zzz</text></g></svg>
<div class="a" style="left:0px;top:446.4px;width:700px;height:12px;background:#f5f5f5;"></div>
<div class="a" style="left:0px;top:446px;width:700px;height:1px;background:#c9c9cc;"></div>
<div class="a" style="left:0px;top:447px;width:700px;height:0.8px;background:#ffffff;"></div>
<div class="a" style="left:0px;top:457.6px;width:700px;height:1px;background:#ffffff;"></div>
<div class="a" style="left:43.3px;top:446.6px;width:0.8px;height:11px;background:#d0d0d0;"></div>
<svg style="left:8.5px;top:450.8px;" width="3" height="4" viewBox="0 0 3 4"><path d="M2.6 0 V4 L0 2 Z" fill="#bbb"/></svg>
<svg style="left:22.5px;top:450.8px;" width="3" height="4" viewBox="0 0 3 4"><path d="M0 0 V4 L2.6 2 Z" fill="#bbb"/></svg>
<div class="a" style="left:44.2px;top:446.8px;width:58.8px;height:11.2px;background:linear-gradient(#ffffff,#dce7f3)"></div>
<div class="a" style="left:44.2px;top:456.9px;width:58.8px;height:1.4px;background:#5fa070;"></div>
<div class="t" style="left:49.70px;top:449px;font-size:7.00px;color:#155a2e;font-weight:bold;font-style:normal;transform:scaleX(0.8462);line-height:7px;">Fitnessübersicht</div>
<div class="a" style="left:103.6px;top:447.6px;width:38px;height:9.9px;background:#f15a24;"></div>
<div class="t" style="left:109.30px;top:449px;font-size:6.60px;color:#fde9df;font-weight:normal;font-style:normal;transform:scaleX(0.9338);line-height:7px;">Anleitung</div>
<svg style="left:158.5px;top:449.5px;" width="8" height="8" viewBox="0 0 8 8"><circle cx="3.7" cy="3.7" r="3.3" fill="none" stroke="#666" stroke-width="0.7"/><path d="M3.7 1.8 V5.6 M1.8 3.7 H5.6" stroke="#555" stroke-width="0.8"/></svg>
<div class="a" style="left:542.5px;top:449.5px;width:0.8px;height:0.8px;background:#999;"></div>
<div class="a" style="left:542.5px;top:451.8px;width:0.8px;height:0.8px;background:#999;"></div>
<div class="a" style="left:542.5px;top:454.1px;width:0.8px;height:0.8px;background:#999;"></div>
<svg style="left:551.5px;top:450.8px;" width="3" height="4" viewBox="0 0 3 4"><path d="M2.6 0 V4 L0 2 Z" fill="#555"/></svg>
<div class="a" style="left:557.5px;top:451.2px;width:141px;height:3.6px;background:#6b6b6b;border-radius:1.8px"></div>
<div class="a" style="left:0px;top:0px;width:700px;height:1.1px;background:#000;"></div>
<div class="a" style="left:0px;top:458.3px;width:700px;height:1.7px;background:#000;"></div>
<div class="a" style="left:0px;top:0px;width:1.2px;height:460px;background:#000;"></div>
<div class="a" style="left:698.8px;top:0px;width:1.2px;height:460px;background:#000;"></div>
</body></html>
